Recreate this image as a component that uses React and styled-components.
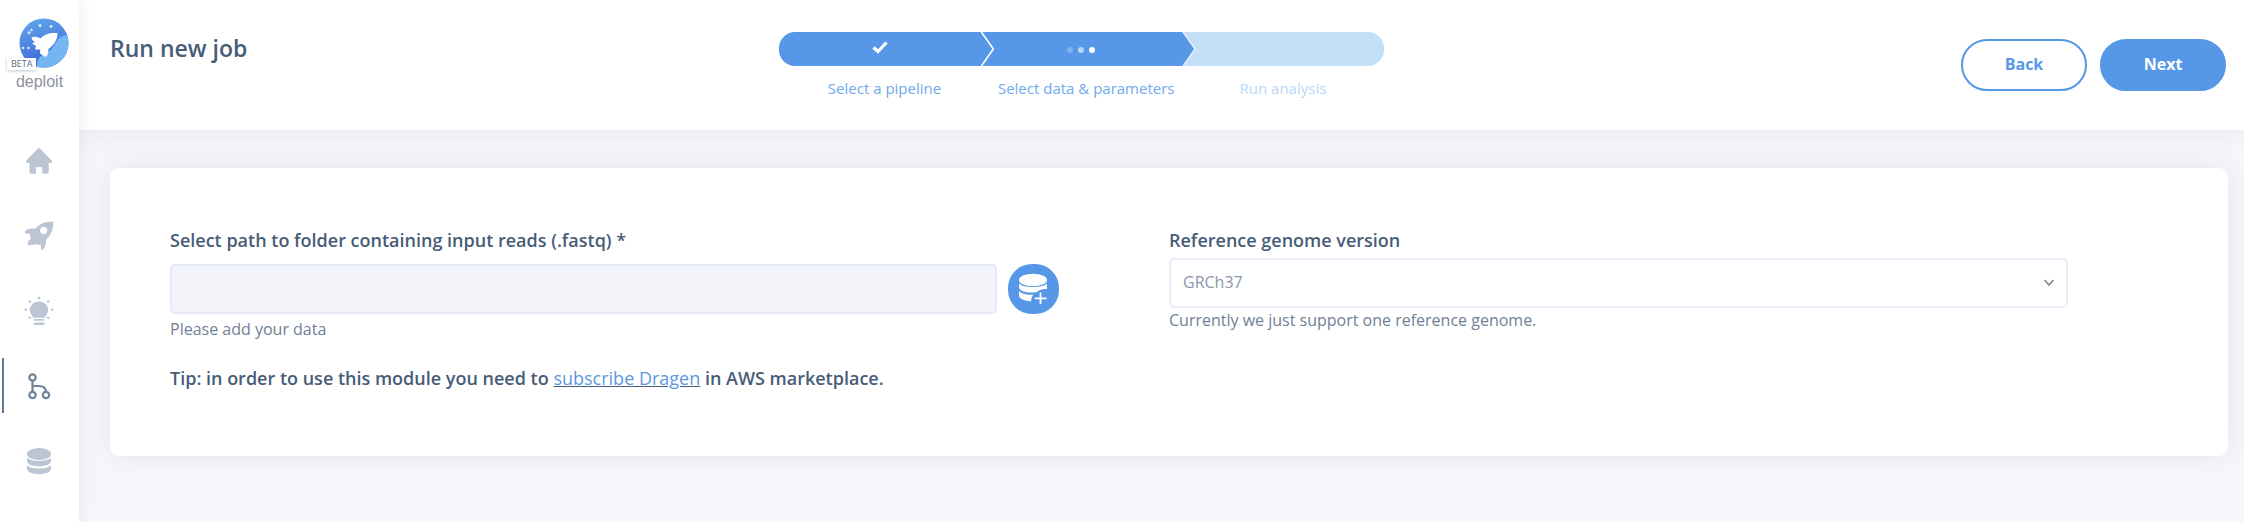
import React, { useState } from 'react';
import styled, { createGlobalStyle } from 'styled-components';

const GlobalStyle = createGlobalStyle`
  * {
    box-sizing: border-box;
  }
  body {
    margin: 0;
    background: #f5f7fc;
    color: #475c77;
    font-family: 'Open Sans', 'Noto Sans', sans-serif;
    font-size: 18px;
  }
`;

const steps = [
  { label: 'Select a pipeline', status: 'done' },
  { label: 'Select data & parameters', status: 'current' },
  { label: 'Run analysis', status: 'pending' },
];

const Logo = () => (
  <svg width="50" height="50" viewBox="0 0 50 50" aria-hidden="true">
    <defs>
      <linearGradient id="sky" x1="0" y1="0" x2="0.3" y2="1">
        <stop offset="0" stopColor="#62a9ec" />
        <stop offset="1" stopColor="#3f68d8" />
      </linearGradient>
      <clipPath id="disc">
        <circle cx="25" cy="25" r="24.5" />
      </clipPath>
    </defs>
    <g clipPath="url(#disc)">
      <rect width="50" height="50" fill="url(#sky)" />
      <path d="M50 17 C43 17 39 20 36 26 C33 31 30 33 27 36 C22 37 16 42 18 50 H50 Z" fill="#74b5f2" />
      <g fill="#d5e8fb">
        <circle cx="21" cy="7.5" r="1.5" />
        <circle cx="32" cy="8.5" r="1.4" />
        <circle cx="12.5" cy="12" r="1.3" />
        <circle cx="10" cy="14.7" r="1.5" />
        <circle cx="4" cy="30" r="1.3" />
        <circle cx="9.5" cy="30" r="1.3" />
      </g>
      <path
        d="M38.5 15 C30 14.5 25 16.5 21.5 20.5 C18 18.5 15 18 12.5 19.5 C13 21.5 14 23 16 24 L13 25.5 L17 28 L16 31.5 L21.5 31.5 C20.5 34 21 35 21.5 36 L26.5 39 C29 37.5 29.5 34 29.5 31 C35 27 38.5 22 38.5 15 Z"
        fill="#fff"
      />
    </g>
  </svg>
);

const HomeIcon = () => (
  <svg width="28" height="28" viewBox="0 0 28 28" fill="currentColor">
    <path d="M13 1.5 Q14 0.7 15 1.5 L26.7 13.5 Q27.8 15.7 26 16 H23.7 V25 Q23.7 26.7 22 26.7 H17.3 V21.2 Q17.3 20 16 20 H12.3 Q11 20 11 21.2 V26.7 H6 Q4.5 26.7 4.5 25 V16 H2 Q0.2 15.7 1.3 13.5 Z" />
  </svg>
);

const RocketIcon = () => (
  <svg width="30" height="30" viewBox="0 0 30 30" fill="currentColor">
    <path
      fillRule="evenodd"
      d="M28.5 0.6 C21 0.7 15.5 3 11.5 7.5 C7.5 7.2 3.5 7.5 1.5 10 C0.3 11.7 1 12.6 2.5 12.6 L6.5 13 C5.5 15 5.8 16 7.2 17.2 C4.5 18.8 3.5 21 3.8 23.7 C4 24.7 4.5 24.8 5.5 24.4 C8 23.6 10.5 24.2 12.7 22.7 C14 24.2 15.2 24.3 16.6 23.6 L17 27.5 C17.2 29.4 18 29.5 19.2 28.3 C21.5 26 22 22.5 22 18.7 C27 14.5 29.2 8.5 29.3 1.5 Q29.3 0.6 28.5 0.6 Z M19.7 5.8 A3.7 3.7 0 1 1 19.6 5.8 Z"
    />
  </svg>
);

const BulbIcon = () => (
  <svg width="30" height="30" viewBox="0 0 30 30" fill="currentColor">
    <path d="M15 5.5 C9.5 5.5 5.8 9.5 5.8 14.2 C5.8 17.2 8 19.3 9.5 21.7 H20.5 C22 19.3 24.2 17.2 24.2 14.2 C24.2 9.5 20.5 5.5 15 5.5 Z" />
    <rect x="9.5" y="23" width="11" height="1.8" rx="0.9" />
    <rect x="9.5" y="26.5" width="11" height="2.5" rx="1.2" />
    <circle cx="15" cy="2" r="1.3" />
    <circle cx="5.8" cy="5.5" r="1.3" />
    <circle cx="24.2" cy="5.5" r="1.3" />
    <circle cx="1.8" cy="13.7" r="1.3" />
    <circle cx="28.2" cy="13.7" r="1.3" />
    <circle cx="5.8" cy="21.8" r="1.3" />
    <circle cx="24.2" cy="21.8" r="1.3" />
  </svg>
);

const BranchIcon = () => (
  <svg width="24" height="28" viewBox="0 0 24 28" fill="none" stroke="currentColor" strokeWidth="2.2">
    <circle cx="5.5" cy="5.5" r="3.2" />
    <circle cx="5.5" cy="23" r="3.2" />
    <circle cx="19" cy="23" r="3.2" />
    <path d="M5.5 9 V19.5 M5.5 14 H12 C17 14 18.5 16 19 19.5" />
  </svg>
);

const DatabaseIcon = () => (
  <svg width="26" height="28" viewBox="0 0 26 28" fill="currentColor">
    <ellipse cx="13" cy="7" rx="12" ry="6" />
    <path d="M1 10.5 C4 15 22 15 25 10.5 V14 C25 21 1 21 1 14 Z" />
    <path d="M1 18 C4 22.7 22 22.7 25 18 V21.5 C25 29 1 29 1 21.5 Z" />
  </svg>
);

const AddDataIcon = () => (
  <svg width="30" height="32" viewBox="0 0 30 32" fill="#fff" aria-hidden="true">
    <ellipse cx="15" cy="7" rx="14" ry="6.2" />
    <path d="M1 10.5 C5 15.3 25 15.3 29 10.5 V16 C25 15.5 21 16.5 18.5 19.3 C10 20.3 1 18.5 1 14 Z" />
    <path d="M1 18 C3.5 21 10 22.3 15.5 21.6 C13.5 24 13 26 13.2 28.3 C7 28 1 26 1 22.5 Z" />
    <path d="M22.5 19.5 V31 M16.8 25.3 H28.5" stroke="#fff" strokeWidth="1.8" />
  </svg>
);

const CheckIcon = () => (
  <svg width="16" height="14" viewBox="0 0 16 14" fill="none" aria-hidden="true">
    <path d="M1.5 6.500 L6 10.500 L14.5 1.500" stroke="#fff" strokeWidth="3.2" />
  </svg>
);

const navItems = [
  { name: 'Home', Icon: HomeIcon },
  { name: 'Projects', Icon: RocketIcon },
  { name: 'Insights', Icon: BulbIcon },
  { name: 'Pipelines', Icon: BranchIcon, active: true },
  { name: 'Data', Icon: DatabaseIcon },
];

function Sidebar() {
  return (
    <SidebarWrapper>
      <Brand href="#">
        <Logo />
        <Beta>BETA</Beta>
        <BrandName>deploit</BrandName>
      </Brand>
      <Nav>
        {navItems.map(({ name, Icon, active }) => (
          <NavLink key={name} href="#" aria-label={name} $active={active}>
            <Icon />
          </NavLink>
        ))}
      </Nav>
    </SidebarWrapper>
  );
}

function Stepper() {
  return (
    <StepList>
      {steps.map((step, idx) => (
        <Step key={step.label} $order={steps.length - idx}>
          <StepBar $status={step.status}>
            {step.status === 'done' && <CheckIcon />}
            {step.status === 'current' && (
              <Dots>
                <Dot $opacity={0.25} />
                <Dot $opacity={0.6} />
                <Dot $opacity={1} />
              </Dots>
            )}
          </StepBar>
          <StepLabel $status={step.status}>{step.label}</StepLabel>
        </Step>
      ))}
    </StepList>
  );
}

function App() {
  const [path, setPath] = useState('');
  const [genome, setGenome] = useState('GRCh37');

  return (
    <Page>
      <GlobalStyle />
      <Sidebar />
      <Main>
        <Header>
          <Title>Run new job</Title>
          <Stepper />
          <Actions>
            <Button type="button" $outline>Back</Button>
            <Button type="button">Next</Button>
          </Actions>
        </Header>

        <Card>
          <Column>
            <Label htmlFor="reads">Select path to folder containing input reads (.fastq) *</Label>
            <InputRow>
              <Input id="reads" type="text" value={path} onChange={(e) => setPath(e.target.value)} />
              <AddButton type="button" aria-label="Add data">
                <AddDataIcon />
              </AddButton>
            </InputRow>
            <Helper>Please add your data</Helper>
            <Tip>
              Tip: in order to use this module you need to <a href="#">subscribe Dragen</a> in AWS marketplace.
            </Tip>
          </Column>
          <Column>
            <Label htmlFor="genome">Reference genome version</Label>
            <SelectBox>
              <Select id="genome" value={genome} onChange={(e) => setGenome(e.target.value)}>
                <option value="GRCh37">GRCh37</option>
              </Select>
              <svg width="12" height="8" viewBox="0 0 12 8" fill="none" aria-hidden="true">
                <path d="M1.5 1 L6 6 L10.5 1" stroke="#8b8b8b" strokeWidth="1.8" />
              </svg>
            </SelectBox>
            <Helper>Currently we just support one reference genome.</Helper>
          </Column>
        </Card>
      </Main>
    </Page>
  );
}

export default App;

const Page = styled.div`
  display: flex;
  min-height: 100vh;
`;

const SidebarWrapper = styled.aside`
  position: relative;
  z-index: 4;
  flex: none;
  width: 79px;
  padding-top: 18px;
  background: #fff;
  box-shadow: 0 0 20px rgba(0, 0, 0, 0.08);
`;

const Brand = styled.a`
  position: relative;
  display: flex;
  flex-direction: column;
  align-items: center;
  height: 105px;
  padding-left: 8px;
  text-decoration: none;
`;

const Beta = styled.span`
  position: absolute;
  top: 40px;
  left: 7px;
  padding: 0 4px;
  background: #fff;
  box-shadow: 0 1px 3px rgba(71, 92, 119, 0.35);
  color: #5c6b80;
  font-size: 9px;
  line-height: 12px;
`;

const BrandName = styled.span`
  padding-right: 8px;
  color: #8b929c;
  font-family: 'Liberation Sans', Arial, sans-serif;
  font-size: 16px;
  line-height: 28px;
`;

const Nav = styled.nav`
  display: flex;
  flex-direction: column;
  gap: 20px;
  padding-top: 10px;
`;

const NavLink = styled.a`
  display: flex;
  align-items: center;
  justify-content: center;
  height: 55px;
  margin-left: 2px;
  padding-right: 5px;
  border-left: 2px solid ${({ $active }) => ($active ? '#64778f' : 'transparent')};
  color: ${({ $active }) => ($active ? '#71839a' : '#bcc5d4')};
`;

const Main = styled.main`
  flex: 1;
  min-width: 0;
`;

const Header = styled.header`
  display: grid;
  grid-template-columns: 31.6% 28.6% 1fr;
  align-items: start;
  height: 130px;
  padding: 32px 18px 0 31px;
  background: #fff;
  box-shadow: 0 0 30px rgba(0, 0, 0, 0.08);
`;

const Title = styled.h1`
  margin: 0;
  font-size: 23px;
  font-weight: 600;
  line-height: 32px;
`;

const StepList = styled.ol`
  display: flex;
  margin: 0;
  padding: 0;
  list-style: none;
`;

const Step = styled.li`
  position: relative;
  z-index: ${({ $order }) => $order};
  flex: 1;
  &:first-child > div {
    border-radius: 16px 0 0 16px;
  }
  &:last-child > div {
    border-radius: 0 16px 16px 0;
  }
`;

const StepBar = styled.div`
  position: relative;
  display: flex;
  align-items: center;
  justify-content: center;
  height: 34px;
  padding-bottom: 2px;
  background: ${({ $status }) => ($status === 'pending' ? '#c3dff7' : '#5697e8')};

  /* arrow tip over the next step, with a thin light edge */
  &::before,
  &::after {
    content: '';
    display: ${({ $status }) => ($status === 'pending' ? 'none' : 'block')};
    position: absolute;
    top: 0;
    left: calc(100% - 2px);
    width: 14px;
    height: 34px;
    background: #5697e8;
    clip-path: polygon(0 0, 2px 0, 100% 50%, 2px 100%, 0 100%);
  }
  &::before {
    width: 16px;
    background: ${({ $status }) => ($status === 'done' ? '#fff' : '#e3f0fc')};
    clip-path: polygon(2px 0, 4px 0, 100% 50%, 4px 100%, 2px 100%);
  }
`;

const Dots = styled.span`
  display: flex;
  gap: 5px;
  padding-top: 4px;
`;

const Dot = styled.i`
  width: 6px;
  height: 6px;
  border-radius: 50%;
  background: #fff;
  opacity: ${({ $opacity }) => $opacity};
`;

const StepLabel = styled.p`
  margin: 11px 0 0;
  padding-left: ${({ $status }) => ($status === 'pending' ? 0 : '10px')};
  color: ${({ $status }) => ($status === 'pending' ? '#b9d7f6' : '#71a9ee')};
  font-size: 15px;
  line-height: 22px;
  text-align: center;
  white-space: nowrap;
`;

const Actions = styled.div`
  display: flex;
  justify-content: flex-end;
  gap: 13px;
  padding-top: 7px;
`;

const Button = styled.button`
  width: 126px;
  height: 52px;
  padding: 0 0 3px;
  border: 2px solid #5697e8;
  border-radius: 26px;
  background: ${({ $outline }) => ($outline ? '#fff' : '#5697e8')};
  color: ${({ $outline }) => ($outline ? '#5697e8' : '#fff')};
  font-family: inherit;
  font-size: 16px;
  font-weight: 700;
`;

const Card = styled.section`
  display: grid;
  grid-template-columns: 1fr 1fr;
  margin: 38px 16px 0 31px;
  padding: 59px 60px 65px;
  border-radius: 9px;
  background: #fff;
  box-shadow: 0 0 30px rgba(0, 0, 0, 0.08);
`;

const Column = styled.div`
  min-width: 0;
`;

const Label = styled.label`
  display: block;
  font-weight: 600;
  line-height: 26px;
`;

const InputRow = styled.div`
  display: flex;
  gap: 11px;
  width: 89%;
  margin: 11px 0 3px;
`;

const Input = styled.input`
  flex: 1;
  min-width: 0;
  height: 50px;
  padding: 0 14px;
  border: 2px solid #e4e9f5;
  border-radius: 5px;
  background: #f3f4fa;
  color: inherit;
  font: inherit;
`;

const AddButton = styled.button`
  display: flex;
  align-items: center;
  justify-content: center;
  width: 51px;
  height: 50px;
  padding: 0 2px 0 0;
  border: 0;
  border-radius: 24px;
  background: #5697e8;
`;

const SelectBox = styled.div`
  position: relative;
  width: 90%;
  margin-top: 5px;
  svg {
    position: absolute;
    top: 21px;
    right: 13px;
    pointer-events: none;
  }
`;

const Select = styled.select`
  display: block;
  width: 100%;
  height: 50px;
  padding: 0 12px 2px;
  border: 2px solid #e7ecf6;
  border-radius: 5px;
  appearance: none;
  background: #fff;
  color: #8a97a9;
  font-family: inherit;
  font-size: 16px;
`;

const Helper = styled.p`
  margin: 0;
  color: #718096;
  font-size: 16px;
  line-height: 24px;
`;

const Tip = styled.p`
  margin: 24px 0 0;
  font-weight: 600;
  line-height: 26px;
  a {
    color: #5b98de;
    font-weight: 400;
    text-decoration-color: #475c77;
  }
`;
